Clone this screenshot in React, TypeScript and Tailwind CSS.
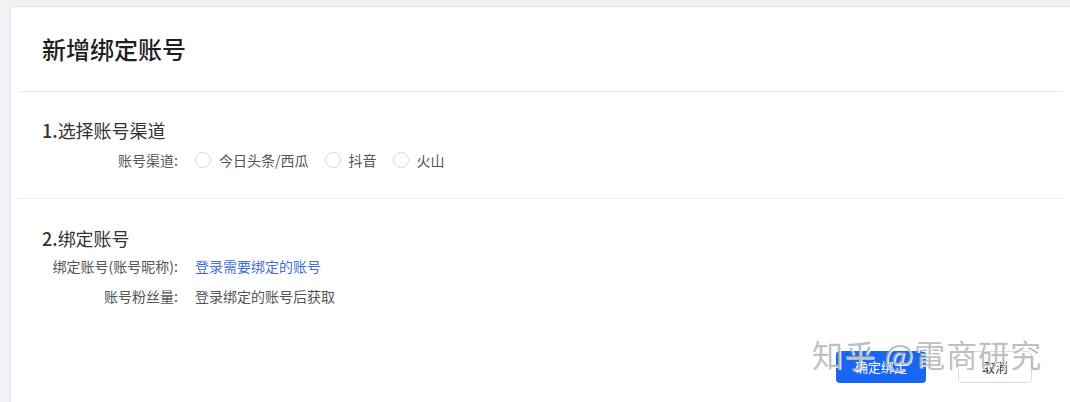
import React from "react";

const channels = ["今日头条/西瓜", "抖音", "火山"];

function Radio({ label }: { label: string }) {
  return (
    <label className="flex items-center mr-[16px] cursor-pointer">
      <span className="w-[16px] h-[16px] rounded-full border border-[#d9d9d9] bg-white" />
      <span className="ml-[8px]">{label}</span>
    </label>
  );
}

function Row({ label, children }: { label: string; children: React.ReactNode }) {
  return (
    <div className="flex items-center h-[24px]">
      <div className="w-[139px] text-right pr-[3px] text-[#555]">{label}:</div>
      <div className="ml-[14px] flex items-center text-[#555]">{children}</div>
    </div>
  );
}

export default function App() {
  return (
    <div
      className="relative h-[402px] bg-[#f0f2f5] pl-[10px] pt-[6px] overflow-hidden"
      style={{ fontFamily: '"Noto Sans CJK SC", "Noto Sans", sans-serif' }}
    >
      <div className="bg-white border border-[#e6e6e6] border-r-0 border-b-0 rounded-tl-[4px] h-[396px] text-[14px]">
        <div className="h-[84px] flex items-center px-[31px]">
          <h1 className="text-[24px] font-medium text-[#1f1f1f]">新增绑定账号</h1>
        </div>
        <div className="mx-[7px] h-px bg-[#ebebeb]" />

        <div className="px-[31px] pt-[26px] h-[106px]">
          <h2 className="text-[18px] leading-[24px] text-[#333]">
            <span className="font-medium">1.</span>选择账号渠道
          </h2>
          <div className="mt-[6px]">
            <Row label="账号渠道">
              {channels.map((c) => (
                <Radio key={c} label={c} />
              ))}
            </Row>
          </div>
        </div>
        <div className="mx-[7px] h-px bg-[#ebebeb]" />

        <div className="px-[31px] pt-[27px]">
          <h2 className="text-[18px] leading-[24px] text-[#333]">
            <span className="font-medium">2.</span>绑定账号
          </h2>
          <div className="mt-[4px] flex flex-col gap-[6px]">
            <Row label="绑定账号(账号昵称)">
              <a className="text-[#3f6fd6] cursor-pointer">登录需要绑定的账号</a>
            </Row>
            <Row label="账号粉丝量">
              <span>登录绑定的账号后获取</span>
            </Row>
          </div>
          <div className="mt-[43px] flex justify-end gap-[32px] pr-[7px]">
            <button className="w-[90px] h-[32px] rounded-[4px] bg-[#1966f5] text-white text-[13px]">
              确定绑定
            </button>
            <button className="w-[74px] h-[32px] rounded-[4px] border border-[#dcdcdc] bg-white text-[#333] text-[13px]">
              取消
            </button>
          </div>
        </div>
      </div>

      <div
        className="pointer-events-none absolute left-[812px] top-[334px] text-[31px] leading-[40px] text-[rgba(170,170,170,0.75)] whitespace-nowrap tracking-[1px]"
        style={{ textShadow: "1px 1px 0 rgba(255,255,255,0.9)" }}
      >
        知乎 @電商研究
      </div>
    </div>
  );
}
